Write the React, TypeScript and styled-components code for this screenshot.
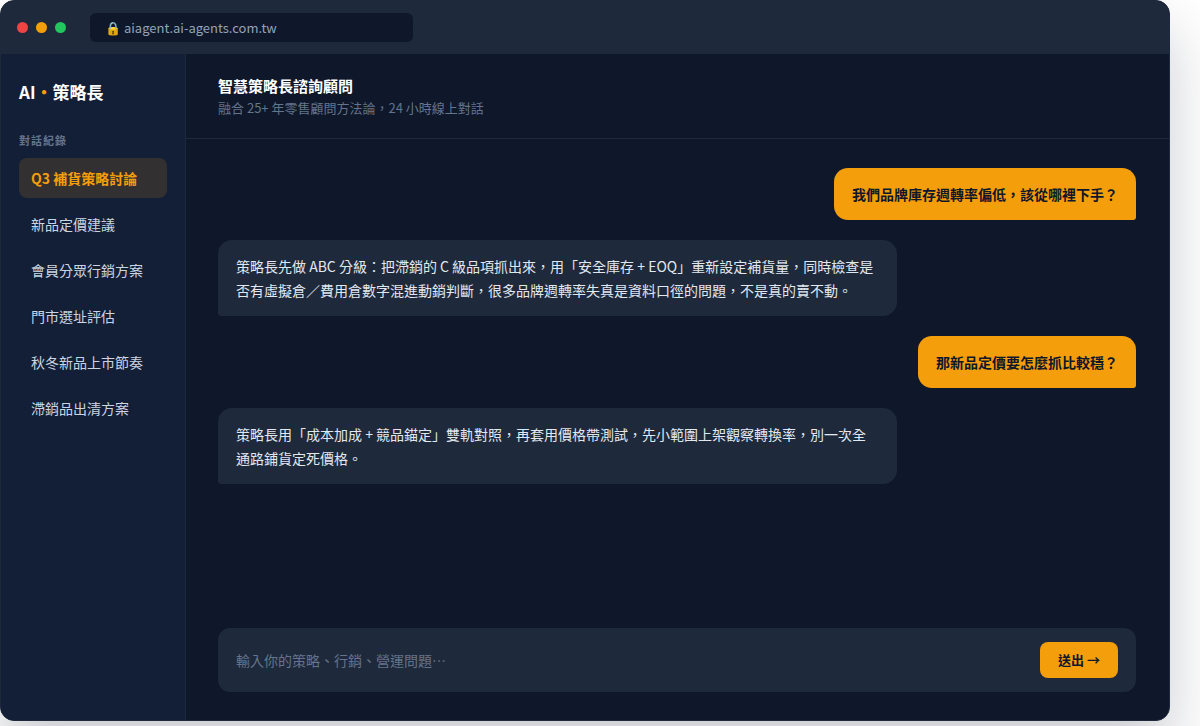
import React from "react";
import styled, { createGlobalStyle } from "styled-components";

const GlobalStyle = createGlobalStyle`
  *, *::before, *::after { box-sizing: border-box; }
  body {
    margin: 0;
    background: #fff;
    font-family: "Noto Sans CJK TC", "Noto Sans", sans-serif;
  }
  h1, h2, p, ul { margin: 0; padding: 0; }
  button, input { font: inherit; border: 0; }
`;

const Page = styled.div`
  display: flex;
  min-height: 100vh;
  padding: 0 30px 5px 0;
  overflow: hidden;
`;

const Window = styled.div`
  flex: 1;
  min-width: 0;
  display: flex;
  flex-direction: column;
  overflow: hidden;
  color: #e2e8f0;
  background: #0f172a;
  border: 1px solid #1e293b;
  border-radius: 14px;
  box-shadow: 0 30px 60px rgba(15, 23, 42, 0.22);
`;

const TitleBar = styled.header`
  display: flex;
  align-items: center;
  gap: 24px;
  padding: 12px 16px;
  background: #1e293b;
`;

const Lights = styled.div`
  display: flex;
  gap: 8px;
`;

const Light = styled.span<{ $color: string }>`
  width: 11px;
  height: 11px;
  border-radius: 50%;
  background: ${(p) => p.$color};
`;

const Address = styled.div`
  width: 323px;
  padding: 5px 15px;
  border-radius: 6px;
  background: #0f172a;
  color: #94a3b8;
  font-size: 13px;
  line-height: 19px;
`;

const Body = styled.div`
  flex: 1;
  display: flex;
`;

const Sidebar = styled.aside`
  flex: 0 0 185px;
  padding: 25px 18px;
  background: #131f37;
  border-right: 1px solid #1e293b;
`;

const Brand = styled.h1`
  margin-bottom: 25px;
  color: #fff;
  font-size: 17px;
  font-weight: 700;
  line-height: 26px;
`;

const Dot = styled.span`
  color: #f59e0b;
`;

const SectionLabel = styled.h2`
  margin-bottom: 8px;
  color: #64748b;
  font-size: 11px;
  font-weight: 700;
  line-height: 20px;
  letter-spacing: 1px;
`;

const History = styled.ul`
  display: flex;
  flex-direction: column;
  gap: 6px;
  list-style: none;
`;

const HistoryLink = styled.a<{ $active?: boolean }>`
  display: block;
  padding: 10px 12px;
  border-radius: 8px;
  font-size: 14px;
  line-height: 20px;
  text-decoration: none;
  white-space: nowrap;
  color: ${(p) => (p.$active ? "#f59e0b" : "#cbd5e1")};
  font-weight: ${(p) => (p.$active ? 700 : 400)};
  background: ${(p) => (p.$active ? "rgba(245, 158, 11, 0.14)" : "transparent")};
`;

const Main = styled.main`
  flex: 1;
  min-width: 0;
  display: flex;
  flex-direction: column;
`;

const ChatHeader = styled.div`
  padding: 20px 32px;
  border-bottom: 1px solid #1e293b;
`;

const ChatTitle = styled.h2`
  color: #fff;
  font-size: 15px;
  font-weight: 700;
  line-height: 24px;
`;

const ChatSubtitle = styled.p`
  color: #64748b;
  font-size: 13px;
  line-height: 20px;
`;

const Messages = styled.div`
  flex: 1;
  display: flex;
  flex-direction: column;
  gap: 20px;
  padding: 29px 33px 28px 32px;
`;

const Bubble = styled.p<{ $mine?: boolean }>`
  max-width: 74%;
  padding: 14px 18px;
  font-size: 14px;
  line-height: 24px;
  align-self: ${(p) => (p.$mine ? "flex-end" : "flex-start")};
  border-radius: ${(p) => (p.$mine ? "14px 14px 3px 14px" : "14px 14px 14px 3px")};
  background: ${(p) => (p.$mine ? "#f59e0b" : "#1e293b")};
  color: ${(p) => (p.$mine ? "#0f172a" : "#e2e8f0")};
  font-weight: ${(p) => (p.$mine ? 700 : 400)};
`;

const Composer = styled.form`
  display: flex;
  align-items: center;
  gap: 12px;
  margin: 0 33px 28px 32px;
  padding: 14px 18px;
  border-radius: 12px;
  background: #1e293b;
`;

const Prompt = styled.input`
  flex: 1;
  min-width: 0;
  padding: 0;
  outline: none;
  background: transparent;
  color: #e2e8f0;
  font-size: 14px;
  line-height: 24px;
  &::placeholder { color: #64748b; opacity: 1; }
`;

const Send = styled.button`
  padding: 8px 18px;
  border-radius: 8px;
  background: #f59e0b;
  color: #0f172a;
  font-size: 13px;
  font-weight: 700;
  line-height: 20px;
  cursor: pointer;
`;

const lights = ["#ef4444", "#f59e0b", "#22c55e"];

const topics = [
  "Q3 補貨策略討論",
  "新品定價建議",
  "會員分眾行銷方案",
  "門市選址評估",
  "秋冬新品上市節奏",
  "滯銷品出清方案",
];

const messages = [
  { mine: true, text: "我們品牌庫存週轉率偏低，該從哪裡下手？" },
  {
    mine: false,
    text: "策略長先做 ABC 分級：把滯銷的 C 級品項抓出來，用「安全庫存 + EOQ」重新設定補貨量，同時檢查是否有虛擬倉／費用倉數字混進動銷判斷，很多品牌週轉率失真是資料口徑的問題，不是真的賣不動。",
  },
  { mine: true, text: "那新品定價要怎麼抓比較穩？" },
  {
    mine: false,
    text: "策略長用「成本加成 + 競品錨定」雙軌對照，再套用價格帶測試，先小範圍上架觀察轉換率，別一次全通路鋪貨定死價格。",
  },
];

export default function App() {
  return (
    <Page lang="zh-Hant">
      <GlobalStyle />
      <Window>
        <TitleBar>
          <Lights>
            {lights.map((c) => (
              <Light key={c} $color={c} />
            ))}
          </Lights>
          <Address>🔒 aiagent.ai-agents.com.tw</Address>
        </TitleBar>
        <Body>
          <Sidebar>
            <Brand>
              AI<Dot>・</Dot>策略長
            </Brand>
            <SectionLabel>對話紀錄</SectionLabel>
            <History>
              {topics.map((t, i) => (
                <li key={t}>
                  <HistoryLink href="#" $active={i === 0}>
                    {t}
                  </HistoryLink>
                </li>
              ))}
            </History>
          </Sidebar>
          <Main>
            <ChatHeader>
              <ChatTitle>智慧策略長諮詢顧問</ChatTitle>
              <ChatSubtitle>融合 25+ 年零售顧問方法論，24 小時線上對話</ChatSubtitle>
            </ChatHeader>
            <Messages>
              {messages.map((m) => (
                <Bubble key={m.text} $mine={m.mine}>
                  {m.text}
                </Bubble>
              ))}
            </Messages>
            <Composer onSubmit={(e) => e.preventDefault()}>
              <Prompt aria-label="輸入問題" placeholder="輸入你的策略、行銷、營運問題⋯" />
              <Send type="submit">送出 →</Send>
            </Composer>
          </Main>
        </Body>
      </Window>
    </Page>
  );
}
